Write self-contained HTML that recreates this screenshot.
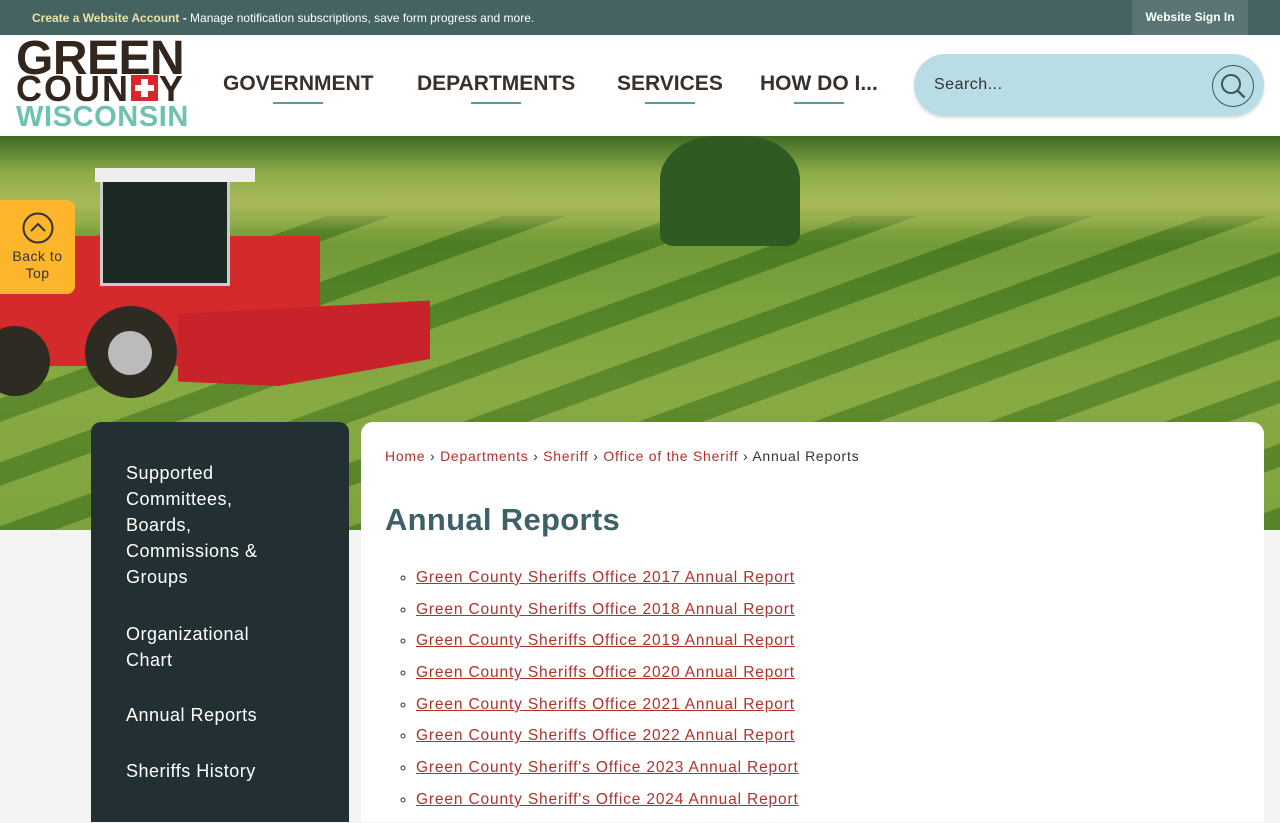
<!DOCTYPE html>
<html><head><meta charset="utf-8"><style>
*{margin:0;padding:0;box-sizing:border-box}
body{width:1280px;height:800px;overflow:hidden;background:#f3f3f3;font-family:"Liberation Sans",sans-serif;position:relative}
.top{position:absolute;left:0;top:0;width:1280px;height:35px;background:#456361;color:#fff;font-size:12px;font-weight:bold}
.top .msg{position:absolute;left:32px;top:11px}
.top .msg b{color:#e9e2a6}
.top .sign{position:absolute;left:1132px;top:0;width:116px;height:35px;background:#5a7573;text-align:center;line-height:35px;font-size:12px}
.hdr{position:absolute;left:0;top:35px;width:1280px;height:101px;background:#fff}
.lg{position:absolute;left:16px;font-weight:900;line-height:1;color:#33261d;white-space:nowrap}
.nav{position:absolute;top:37px;font-size:21px;font-weight:bold;color:#3b3029}
.nav i{position:absolute;left:50%;margin-left:-25px;top:30px;width:50px;height:2px;background:#5a9c92}
.search{position:absolute;left:914px;top:19px;width:350px;height:62px;border-radius:31px;background:#b9dde5;box-shadow:0 2px 3px rgba(0,0,0,.15)}
.search span{position:absolute;left:20px;top:22px;font-size:16px;color:#333;letter-spacing:.5px}
.hero{position:absolute;left:0;top:136px;width:1280px;height:394px;overflow:hidden;
background:linear-gradient(180deg,#4e7a2a 0%,#6d9634 8%,#8caa45 18%,#5f8f2b 28%,#6c9a34 45%,#7da33b 65%,#6f9a34 100%)}
.stripes{position:absolute;left:-200px;top:80px;width:1700px;height:400px;background:repeating-linear-gradient(160deg,rgba(40,90,20,.35) 0 22px,rgba(170,190,90,.25) 22px 60px);}
.btt{position:absolute;left:0;top:200px;width:75px;height:94px;background:#fdb62b;border-radius:0 8px 8px 0;text-align:center;color:#333;font-size:14px;line-height:17px;letter-spacing:.5px}
.side{position:absolute;left:91px;top:422px;width:258px;height:400px;background:#233033;border-radius:10px 10px 0 0;color:#fff;font-size:18px;line-height:26px;letter-spacing:.5px}
.side div{position:absolute;left:35px;width:150px}
.card{position:absolute;left:361px;top:422px;width:903px;height:400px;background:#fff;border-radius:12px 12px 0 0}
.bc{position:absolute;left:24px;top:26px;font-size:14px;color:#333;letter-spacing:.75px}
.bc a{color:#b3302b;text-decoration:none}
h1{position:absolute;left:24px;top:80px;font-size:31px;color:#3d6166;font-weight:bold;letter-spacing:.3px}
ul{position:absolute;left:55px;top:147px;list-style:circle;font-size:15.5px;letter-spacing:.85px}
li{height:31.7px;color:#333}
li a{color:#b3302b;text-decoration:underline}
</style></head><body>
<div class="top"><div class="msg"><b>Create a Website Account</b> - <span style="font-weight:normal">Manage notification subscriptions, save form progress and more.</span></div><div class="sign">Website Sign In</div></div>
<div class="hdr">
<div class="lg" style="top:0px;font-size:48px;letter-spacing:-0.5px">GREEN</div>
<div class="lg" style="top:36px;font-size:36px;letter-spacing:2px">COUN<span style="display:inline-block;width:27px;height:26px;background:#d8262b;position:relative;vertical-align:0px;margin:0 1px"><span style="position:absolute;left:10px;top:4px;width:7px;height:18px;background:#fff"></span><span style="position:absolute;left:4px;top:10px;width:19px;height:6px;background:#fff"></span></span>Y</div>
<div class="lg" style="top:68px;font-size:29px;color:#6fc1b0;letter-spacing:.6px">WISCONSIN</div>
<div class="nav" style="left:223px">GOVERNMENT<i></i></div>
<div class="nav" style="left:417px">DEPARTMENTS<i></i></div>
<div class="nav" style="left:617px">SERVICES<i></i></div>
<div class="nav" style="left:760px">HOW DO I...<i></i></div>
<div class="search"><span>Search...</span><svg style="position:absolute;left:297px;top:10px" width="44" height="44" viewBox="0 0 44 44"><circle cx="22" cy="22" r="20.5" fill="none" stroke="#3c5a5a" stroke-width="1"/><circle cx="20" cy="20" r="9" fill="none" stroke="#3c5a5a" stroke-width="2"/><path d="M26.5 26.5l7 7" stroke="#3c5a5a" stroke-width="2.4"/></svg></div>
</div>
<div class="hero"><div class="stripes"></div>
<div style="position:absolute;left:0;top:0;width:1280px;height:95px;background:linear-gradient(180deg,#3f6a25,#8fae4a 40%,#a9b85a 70%,rgba(110,150,50,0))"></div>
<div style="position:absolute;left:660px;top:0;width:140px;height:110px;background:#2f5a22;border-radius:40% 40% 10% 10%"></div>
<div style="position:absolute;left:0;top:100px;width:320px;height:130px;background:#d42a2b"></div>
<div style="position:absolute;left:100px;top:40px;width:130px;height:110px;background:#1c2a24;border:3px solid #ccc"></div>
<div style="position:absolute;left:95px;top:32px;width:160px;height:14px;background:#eee"></div>
<div style="position:absolute;left:178px;top:160px;width:252px;height:90px;background:#c8222a;clip-path:polygon(0 20%,100% 5%,100% 70%,40% 100%,0 95%)"></div>
<div style="position:absolute;left:85px;top:170px;width:92px;height:92px;border-radius:50%;background:#2e2b22"></div>
<div style="position:absolute;left:108px;top:195px;width:44px;height:44px;border-radius:50%;background:#bbb"></div>
<div style="position:absolute;left:-20px;top:190px;width:70px;height:70px;border-radius:50%;background:#2e2b22"></div>
</div>
<div class="btt"><svg style="margin-top:12px" width="32" height="32" viewBox="0 0 32 32"><circle cx="16" cy="16" r="14.5" fill="none" stroke="#333" stroke-width="2"/><path d="M9 19l7-7 7 7" fill="none" stroke="#333" stroke-width="2"/></svg><br>Back to<br>Top</div>
<div class="side">
<div style="top:38px">Supported Committees, Boards, Commissions &amp; Groups</div>
<div style="top:199px">Organizational Chart</div>
<div style="top:280px;width:200px">Annual Reports</div>
<div style="top:336px;width:200px">Sheriffs History</div>
</div>
<div class="card">
<div class="bc"><a>Home</a> › <a>Departments</a> › <a>Sheriff</a> › <a>Office of the Sheriff</a> › Annual Reports</div>
<h1>Annual Reports</h1>
<ul>
<li><a>Green County Sheriffs Office 2017 Annual Report</a></li>
<li><a>Green County Sheriffs Office 2018 Annual Report</a></li>
<li><a>Green County Sheriffs Office 2019 Annual Report</a></li>
<li><a>Green County Sheriffs Office 2020 Annual Report</a></li>
<li><a>Green County Sheriffs Office 2021 Annual Report</a></li>
<li><a>Green County Sheriffs Office 2022 Annual Report</a></li>
<li><a>Green County Sheriff's Office 2023 Annual Report</a></li>
<li><a>Green County Sheriff's Office 2024 Annual Report</a></li>
</ul>
</div>
</body></html>
